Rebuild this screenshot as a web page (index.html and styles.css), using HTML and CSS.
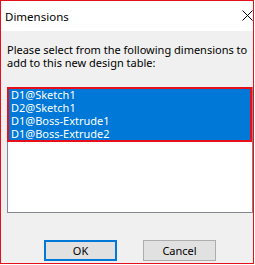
FILE: index.html
```html
<!DOCTYPE html>
<html>
<head>
<meta charset="utf-8">
<link rel="stylesheet" href="styles.css">
</head>
<body>
<div class="window">
  <div class="titlebar">
    <span class="title">Dimensions</span>
    <svg class="close" width="11" height="11" viewBox="0 0 11 11"><path d="M0.5 0.5 L10.5 10.5 M10.5 0.5 L0.5 10.5" stroke="#000" stroke-width="1" fill="none"/></svg>
  </div>
  <div class="content">
    <p class="prompt">Please select from the following dimensions to add to this new design table:</p>
    <div class="list">
      <div class="item">D1@Sketch1</div>
      <div class="item">D2@Sketch1</div>
      <div class="item">D1@Boss-Extrude1</div>
      <div class="item">D1@Boss-Extrude2</div>
      <div class="highlight"></div>
    </div>
    <div class="buttons">
      <button class="btn default">OK</button>
      <button class="btn">Cancel</button>
    </div>
  </div>
</div>
</body>
</html>
```
FILE: styles.css
```css
html, body {
  margin: 0;
  padding: 0;
  background: #ffffff;
}
body {
  font-family: "Noto Sans", "Open Sans", sans-serif;
  font-size: 11px;
  color: #000;
}
.window {
  width: 254px;
  height: 264px;
  box-sizing: border-box;
  border: 1px solid #e5101b;
  display: flex;
  flex-direction: column;
}
.titlebar {
  height: 30px;
  flex: none;
  background: #ffffff;
  display: flex;
  align-items: center;
  justify-content: space-between;
  padding-left: 4px;
  padding-right: 0;
}
.title {
  font-size: 11.5px;
  line-height: 16px;
  margin-top: 1px;
}
.close {
  display: block;
  margin-top: -1px;
}
.content {
  flex: 1;
  background: #f0f0f0;
  padding: 12px 0 2px 6px;
  display: flex;
  flex-direction: column;
}
.prompt {
  margin: 0;
  font-size: 11px;
  line-height: 13px;
  padding-right: 2px;
}
.list {
  position: relative;
  margin-top: 18px;
  height: 126px;
  box-sizing: border-box;
  border: 1px solid #828790;
  background: #ffffff;
}
.item {
  height: 13px;
  line-height: 13px;
  padding-left: 3px;
  background: #0078d7;
  color: #ffffff;
  font-size: 11px;
  margin-right: 2px;
}
.highlight {
  position: absolute;
  left: -1px;
  top: -1px;
  width: 245px;
  height: 55px;
  box-sizing: border-box;
  border: 2px solid #e5101b;
}
.buttons {
  margin-top: auto;
  display: flex;
  gap: 26px;
  padding-left: 37px;
}
.btn {
  width: 73px;
  height: 21px;
  box-sizing: border-box;
  border: 1px solid #adadad;
  background: #e1e1e1;
  font-family: "Noto Sans", "Open Sans", sans-serif;
  font-size: 11px;
  color: #000;
  padding: 0;
  line-height: 18px;
}
.btn.default {
  border: 2px solid #0078d7;
}
```
